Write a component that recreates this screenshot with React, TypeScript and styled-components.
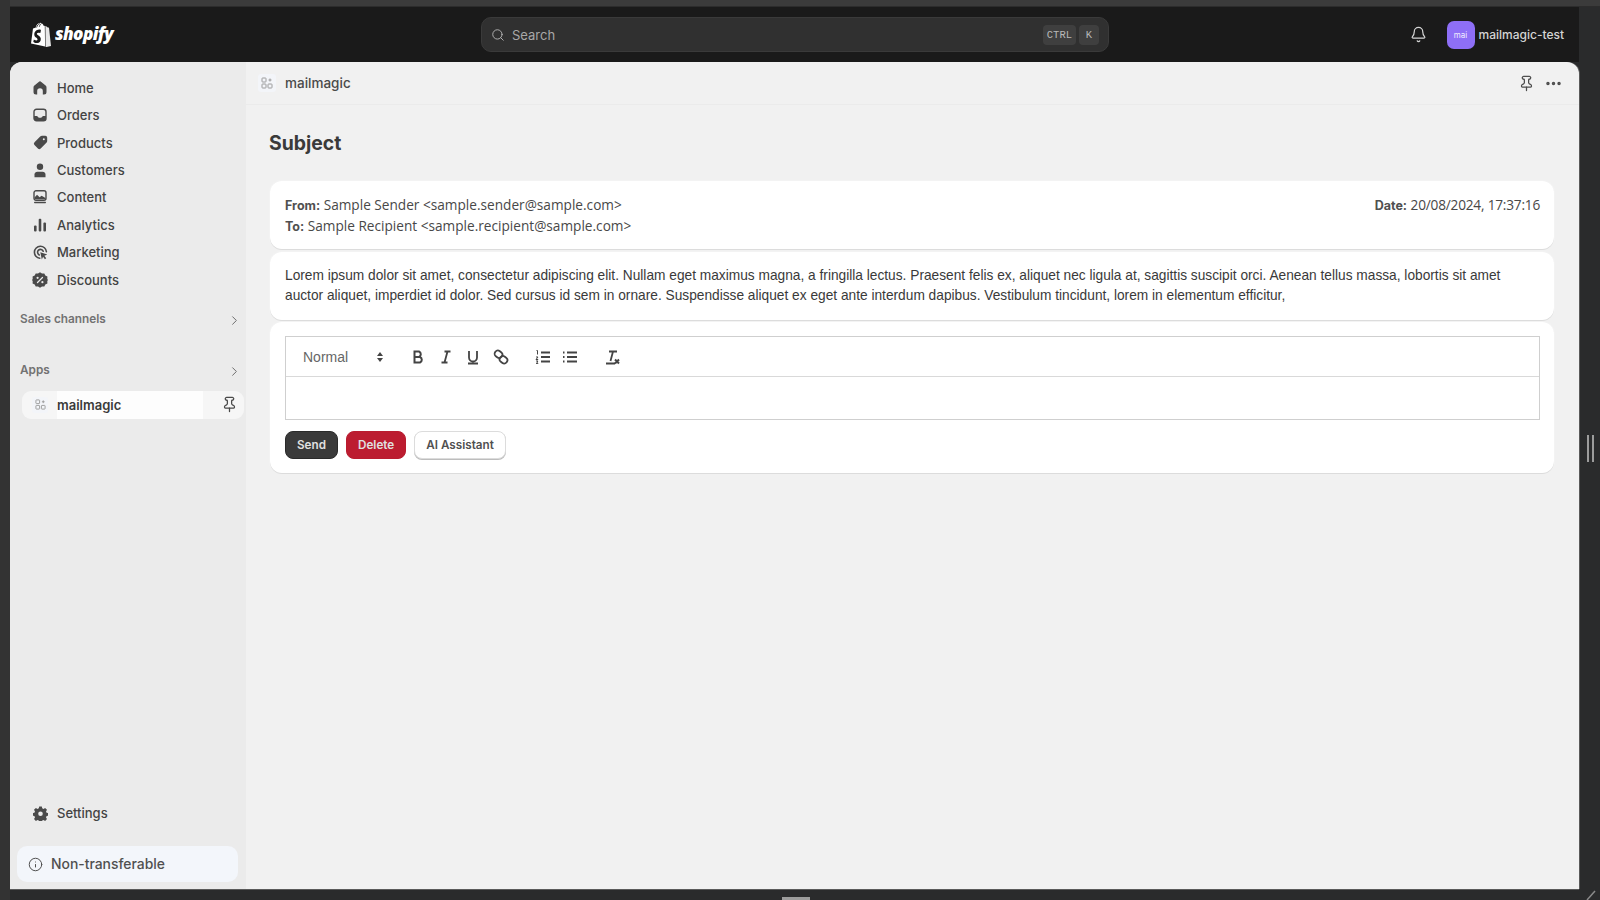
import React from 'react';
import styled, { createGlobalStyle } from 'styled-components';
import { Bell, ChevronRight, Ellipsis, Search, Pin, Info } from 'lucide-react';

const GlobalStyle = createGlobalStyle`
  html, body {
    margin: 0;
    padding: 0;
    background: #2a2b2c;
    font-family: Inter, "Liberation Sans", sans-serif;
  }
  * { box-sizing: border-box; }
`;

const Page = styled.div`
  position: relative;
  width: 1600px;
  height: 900px;
  overflow: hidden;
  background: #2a2b2c;
  display: flex;
  flex-direction: column;
  padding: 7px 21px 11px 10px;
`;

const TopEdge = styled.div`
  position: absolute;
  inset: 0 0 auto 0;
  height: 7px;
  background: #3b3b3b;
  border-bottom: 1px solid #2c2c2c;
`;

const LeftEdge = styled.div`
  position: absolute;
  left: 0;
  top: 0;
  bottom: 0;
  width: 10px;
  background: #333;
`;

const TopBar = styled.header`
  height: 55px;
  flex: none;
  background: #1a1a1a;
  display: grid;
  grid-template-columns: 471px 628px 1fr;
  align-items: center;
  position: relative;
`;

const Logo = styled.div`
  display: flex;
  align-items: center;
  gap: 3px;
  padding-left: 20px;
  color: #fff;
`;

const LogoWord = styled.span`
  font-family: "Open Sans", sans-serif;
  font-size: 17.2px;
  font-weight: 800;
  font-style: italic;
  letter-spacing: -0.6px;
  position: relative;
  top: -1px;
`;

const SearchBox = styled.div`
  height: 35px;
  border-radius: 10px;
  background: #303030;
  border: 1px solid #3a3a3a;
  display: flex;
  align-items: center;
  padding: 0 9px 0 9px;
  color: #b5b5b5;
  font-size: 13px;
  gap: 7px;
`;

const SearchLabel = styled.span`
  flex: 1;
  color: #a8a8a8;
`;

const KeyGroup = styled.div`
  display: flex;
  gap: 3px;
`;

const Key = styled.span`
  height: 20px;
  padding: 0 4px;
  min-width: 20px;
  border-radius: 4px;
  background: #3f3f3f;
  display: flex;
  align-items: center;
  justify-content: center;
  color: #b8b8b8;
  font-size: 10.5px;
  font-family: "Liberation Mono", monospace;
`;

const TopRight = styled.div`
  display: flex;
  align-items: center;
  justify-content: flex-end;
  padding-right: 15px;
  color: #d6d6d6;
`;

const Avatar = styled.div`
  width: 28px;
  height: 28px;
  margin: 0 4px 0 20px;
  border-radius: 7px;
  background: #8e6ff7;
  color: #f2eefe;
  font-size: 8px;
  display: flex;
  align-items: center;
  justify-content: center;
`;

const ShopName = styled.span`
  font-size: 12px;
  font-weight: 500;
  color: #d4d4d4;
`;

const Frame = styled.div`
  flex: 1;
  min-height: 0;
  display: flex;
  border-radius: 12px 12px 0 0;
  overflow: hidden;
  background: #f1f1f1;
  box-shadow: 0 1px 0 #5a5a5a, 1px 0 0 #5a5a5a;
  position: relative;
`;

const Sidebar = styled.nav`
  width: 236px;
  flex: none;
  background: #ebebeb;
  display: flex;
  flex-direction: column;
  padding: 12px 7px 7px 7px;
`;

const NavRow = styled.div`
  height: 27.45px;
  display: flex;
  align-items: center;
  gap: 9px;
  padding-left: 15px;
  font-size: 13px;
  font-weight: 500;
  color: #434343;
`;

const IconSlot = styled.span`
  width: 16px;
  height: 16px;
  flex: none;
  display: flex;
  align-items: center;
  justify-content: center;
  color: #4a4a4a;
`;

const SectionRow = styled.div<{ $top: number }>`
  margin-top: ${props => props.$top}px;
  margin-right: -4px;
  height: 24px;
  display: flex;
  align-items: center;
  justify-content: space-between;
  padding: 0 1px 0 3px;
  font-size: 11.8px;
  font-weight: 600;
  color: #727272;
`;

const SectionChevron = styled(ChevronRight)`
  position: relative;
  top: 2px;
  color: #6d6d6d;
`;

const ActiveApp = styled.div`
  margin: 9px -5px 0 5px;
  height: 28px;
  border-radius: 9px;
  background: #f6f6f6;
  display: flex;
  align-items: center;
  position: relative;
  padding-left: 10px;
  gap: 9px;
  font-size: 13px;
  font-weight: 600;
  color: #3a3a3a;
`;

const AppName = styled.span`
  flex: 1;
  background: #fdfdfd;
  align-self: stretch;
  display: flex;
  align-items: center;
  margin-right: 9px;
`;

const PinSlot = styled.span`
  display: flex;
  margin-right: 6px;
  color: #4a4a4a;
`;

const Spacer = styled.div`
  flex: 1;
`;

const NoticeBox = styled.div`
  margin-top: 19px;
  height: 36px;
  border-radius: 10px;
  background: #f3f6fb;
  display: flex;
  align-items: center;
  gap: 8px;
  padding-left: 11px;
  font-size: 13.9px;
  font-weight: 500;
  color: #505050;
  width: 221px;
`;

const Main = styled.main`
  flex: 1;
  min-width: 0;
  display: flex;
  flex-direction: column;
`;

const AppHeader = styled.div`
  height: 43px;
  flex: none;
  border-bottom: 1px solid #ebebeb;
  display: flex;
  align-items: center;
  padding: 0 16px 0 12px;
  gap: 9px;
  font-size: 13.5px;
  font-weight: 500;
  color: #4a4a4a;
`;

const AppGlyph = styled.span<{ $size: number }>`
  width: ${props => props.$size}px;
  height: ${props => props.$size}px;
  flex: none;
  border-radius: 3px;
  background: #f3f5f9;
  display: flex;
  align-items: center;
  justify-content: center;
  color: #9a9a9a;
`;

const HeaderTitle = styled.span`
  flex: 1;
`;

const HeaderActions = styled.div`
  display: flex;
  align-items: center;
  gap: 9px;
  color: #4e4e4e;
`;

const Content = styled.div`
  padding: 0 25px 0 24px;
`;

const Title = styled.h1`
  margin: 26px 0 26px -1px;
  font-size: 19.4px;
  line-height: 24px;
  font-weight: 700;
  color: #3a3a3a;
`;

const Card = styled.section<{ $height: number; $gap: number }>`
  height: ${props => props.$height}px;
  margin-bottom: ${props => props.$gap}px;
  border-radius: 12px;
  background: #fff;
  box-shadow: 0 1px 0 #dcdcdc, 0 0 0 1px #f3f3f3;
  padding: 14px 14px 14px 15px;
`;

const MetaRow = styled.div`
  display: flex;
  justify-content: space-between;
  font-family: "Open Sans", sans-serif;
  font-size: 13.65px;
  line-height: 20px;
  color: #484848;
`;

const MetaLabel = styled.b`
  font-family: Inter, sans-serif;
  font-size: 12.5px;
  font-weight: 700;
  color: #505050;
`;

const DateValue = styled.span`
  letter-spacing: -0.2px;
`;

const BodyText = styled.p`
  margin: 0;
  font-family: "Liberation Sans", Arial, sans-serif;
  font-size: 13.72px;
  line-height: 20px;
  color: #3a3a3a;
`;

const Editor = styled.div`
  border: 1px solid #cfcfcf;
  height: 84px;
  display: flex;
  flex-direction: column;
`;

const EditorBar = styled.div`
  height: 40px;
  flex: none;
  border-bottom: 1px solid #d9d9d9;
  display: flex;
  align-items: center;
  padding-left: 17px;
  color: #444;
`;

const FormatSelect = styled.div`
  width: 81px;
  display: flex;
  align-items: center;
  justify-content: space-between;
  font-family: "Liberation Sans", sans-serif;
  font-size: 14px;
  color: #666;
  margin-right: 25px;
`;

const ToolGroup = styled.div<{ $gap: number; $after: number }>`
  display: flex;
  align-items: center;
  gap: ${props => props.$gap}px;
  margin-right: ${props => props.$after}px;
`;

const ButtonRow = styled.div`
  display: flex;
  gap: 8px;
  margin-top: 11px;
`;

const Button = styled.button<{ $kind: 'dark' | 'danger' | 'plain' }>`
  height: 28px;
  padding: 0 11px;
  border-radius: 8px;
  font-family: Inter, sans-serif;
  font-size: 11.7px;
  font-weight: 600;
  cursor: pointer;
  border: 1px solid ${props => ({ dark: '#2a2a2a', danger: '#b91c2f', plain: '#dcdcdc' }[props.$kind])};
  background: ${props => ({ dark: '#3a3a3a', danger: '#bc1c30', plain: '#fff' }[props.$kind])};
  color: ${props => (props.$kind === 'plain' ? '#505050' : '#e0e0e0')};
  box-shadow: ${props => (props.$kind === 'plain' ? '0 1px 0 #bdbdbd' : 'none')};
`;

const SideHandle = styled.div`
  position: absolute;
  left: 1587px;
  top: 435px;
  width: 7px;
  height: 27px;
  border-left: 2px solid #9c9c9c;
  border-right: 2px solid #9c9c9c;
`;

const BottomHandle = styled.div`
  position: absolute;
  left: 782px;
  top: 897px;
  width: 28px;
  height: 3px;
  background: #9c9c9c;
`;

const CornerGrip = styled.svg`
  position: absolute;
  left: 1586px;
  top: 890px;
`;

const ShopifyBag = () => (
  <svg width="22" height="25" viewBox="0 0 22 25" aria-hidden="true">
    <path fill="#fff" d="M1 21.5 3 6.600c1.200-.3 2-.6 2.600-.8C6.300 3.200 8 .8 10.200.8c.6 0 1 .2 1.300.6 1.300.1 2 1.400 2.300 2.700l1-.3.3 20.600L1 21.500z" />
    <path fill="#e8e8e8" d="M15.800 3.900c.2 0 1.800 1.500 2 1.600.2 0 1 .1 1.200.2l2 18.300-5.400 1.200-.2-21.300z" />
    <path fill="#1a1a1a" d="M10.900 8.700 10.300 11s-.9-.4-1.900-.3c-1.500.1-1.500 1-1.500 1.300.1 1.300 3.700 1.600 3.900 4.800.2 2.500-1.300 4.200-3.500 4.300-2.600.2-4-1.400-4-1.400l.6-2.300s1.400 1.100 2.600 1c.8 0 1.100-.7 1-1.100-.1-1.800-3-1.700-3.200-4.600C4.100 10.200 6 7.800 9.200 7.600c1.200-.1 1.700.2 1.700 1.100z" />
    <path fill="none" stroke="#1a1a1a" strokeWidth=".8" d="M6.600 5.500c.5-2 1.900-3.700 3.300-3.900M9.300 4.800c.3-1.300 1-2.700 2-3" />
  </svg>
);

const HomeIcon = () => (
  <svg width="14" height="14" viewBox="0 0 14 14" fill="currentColor" aria-hidden="true">
    <path d="M5.700.9a2 2 0 0 1 2.600 0l4.300 3.600c.6.500.9 1.200.9 1.900V11a2.500 2.500 0 0 1-2.500 2.500H9.800V10a2.800 2.800 0 0 0-5.600 0v3.500H3A2.500 2.500 0 0 1 .5 11V6.400c0-.7.300-1.400.9-1.900L5.700.9z" />
  </svg>
);

const OrdersIcon = () => (
  <svg width="14" height="14" viewBox="0 0 14 14" aria-hidden="true">
    <rect x="1" y="1.200" width="12" height="11.600" rx="2.500" fill="none" stroke="currentColor" strokeWidth="1.400" />
    <path fill="currentColor" d="M1 8h2.800c.5 0 .8.300 1 .7.300.7 1.100 1.100 2.200 1.100s1.900-.4 2.200-1.100c.2-.4.500-.7 1-.7H13v2.500a2.300 2.300 0 0 1-2.300 2.300H3.300A2.300 2.300 0 0 1 1 10.500V8z" />
  </svg>
);

const TagIcon = () => (
  <svg width="15" height="15" viewBox="0 0 15 15" aria-hidden="true">
    <path fill="currentColor" fillRule="evenodd" d="M9 .8h3.300c1 0 1.900.9 1.900 1.900V6c0 .7-.3 1.300-.8 1.800l-5.700 5.700a2 2 0 0 1-2.800 0L1.500 10.100a2 2 0 0 1 0-2.800L7.200 1.600C7.700 1.100 8.300.8 9 .8zm1.800 2.400a1 1 0 1 0 0 2 1 1 0 0 0 0-2z" />
  </svg>
);

const PersonIcon = () => (
  <svg width="14" height="15" viewBox="0 0 14 15" fill="currentColor" aria-hidden="true">
    <circle cx="7" cy="3.800" r="3.200" />
    <path d="M1.500 11.500c0-1.600 1.300-2.700 2.900-2.700h5.200c1.600 0 2.900 1.100 2.900 2.700v2.700h-11v-2.700z" />
  </svg>
);

const ContentIcon = () => (
  <svg width="14" height="14" viewBox="0 0 14 14" aria-hidden="true">
    <rect x="1" y=".8" width="12" height="9.500" rx="2" fill="none" stroke="currentColor" strokeWidth="1.400" />
    <path fill="currentColor" d="M1.500 7.500 4 4.800l2.600 2.400 2-1.500 3.900 2.300v1.300H1.500z" />
    <rect x="1" y="11.700" width="12" height="1.500" rx=".7" fill="currentColor" />
  </svg>
);

const ChartIcon = () => (
  <svg width="14" height="14" viewBox="0 0 14 14" fill="currentColor" aria-hidden="true">
    <rect x="1" y="7.500" width="2.600" height="6" rx="1" />
    <rect x="5.700" y=".8" width="2.600" height="12.700" rx="1" />
    <rect x="10.400" y="4.500" width="2.600" height="9" rx="1" />
  </svg>
);

const TargetIcon = () => (
  <svg width="15" height="15" viewBox="0 0 15 15" aria-hidden="true">
    <path fill="none" stroke="currentColor" strokeWidth="1.600" strokeLinecap="round" d="M6.800 13.200A6 6 0 1 1 13.400 6.700" />
    <path fill="none" stroke="currentColor" strokeWidth="1.600" strokeLinecap="round" d="M6.300 9.900A2.900 2.900 0 1 1 10.200 6.300" />
    <path fill="currentColor" d="M7.300 7.300l7 2.200-2.900 1.200 1.800 2.500-1.300 1-1.800-2.500-1.300 2.700z" />
  </svg>
);

const BadgeIcon = () => (
  <svg width="16" height="16" viewBox="0 0 16 16" aria-hidden="true">
    <path fill="currentColor" d="M8 .3l2 1.300 2.300-.1 1 2.100 2.100 1-.1 2.300L16 8l-.7 1.100.1 2.300-2.100 1-1 2.100-2.300-.1-2 1.300-2-1.300-2.300.1-1-2.100-2.100-1 .1-2.300L0 8l.7-1.100-.1-2.300 2.100-1 1-2.100 2.300.1z" />
    <circle cx="5.600" cy="5.800" r="1.100" fill="#ebebeb" />
    <circle cx="10.400" cy="10.200" r="1.100" fill="#ebebeb" />
    <path stroke="#ebebeb" strokeWidth="1.300" strokeLinecap="round" d="M10.500 5.500 5.500 10.500" />
  </svg>
);

const GearIcon = () => (
  <svg width="15" height="15" viewBox="0 0 15 15" aria-hidden="true">
    <path fill="currentColor" fillRule="evenodd" d="M6.200.5h2.600l.4 1.800 1.300.6 1.600-1 1.900 1.900-1 1.600.6 1.300 1.800.4v2.600l-1.800.4-.6 1.300 1 1.600-1.900 1.900-1.600-1-1.300.6-.4 1.700H6.200l-.4-1.700-1.300-.6-1.600 1-1.900-1.900 1-1.600-.6-1.300-1.800-.4V7.100l1.800-.4.6-1.300-1-1.600 1.900-1.900 1.600 1 1.300-.6.400-1.800zm1.300 5a2.300 2.300 0 1 0 0 4.600 2.300 2.300 0 0 0 0-4.600z" />
  </svg>
);

const AppTiles = ({ size }: { size: number }) => (
  <svg width={size} height={size} viewBox="0 0 12 12" fill="none" stroke="currentColor" strokeWidth="1" aria-hidden="true">
    <rect x="1" y="1" width="4" height="4" rx=".6" />
    <rect x="1" y="7" width="4" height="4" rx=".6" />
    <rect x="7" y="7" width="4" height="4" rx=".6" />
    <path d="M9 1.500v3M7.500 3h3" />
  </svg>
);

const ToolIcon = ({ children }: { children: React.ReactNode }) => (
  <svg width="18" height="18" viewBox="0 0 18 18" fill="none" stroke="#444" strokeWidth="1.800" aria-hidden="true">
    {children}
  </svg>
);

const navItems = [
  { label: 'Home', icon: <HomeIcon /> },
  { label: 'Orders', icon: <OrdersIcon /> },
  { label: 'Products', icon: <TagIcon /> },
  { label: 'Customers', icon: <PersonIcon /> },
  { label: 'Content', icon: <ContentIcon /> },
  { label: 'Analytics', icon: <ChartIcon /> },
  { label: 'Marketing', icon: <TargetIcon /> },
  { label: 'Discounts', icon: <BadgeIcon /> },
];

const App: React.FC = () => (
  <Page>
    <GlobalStyle />
    <TopEdge />
    <LeftEdge />
    <TopBar>
      <Logo>
        <ShopifyBag />
        <LogoWord>shopify</LogoWord>
      </Logo>
      <SearchBox>
        <Search size={14} strokeWidth={1.6} />
        <SearchLabel>Search</SearchLabel>
        <KeyGroup>
          <Key>CTRL</Key>
          <Key>K</Key>
        </KeyGroup>
      </SearchBox>
      <TopRight>
        <Bell size={17} strokeWidth={1.7} />
        <Avatar>mai</Avatar>
        <ShopName>mailmagic-test</ShopName>
      </TopRight>
    </TopBar>
    <Frame>
      <Sidebar>
        {navItems.map(item => (
          <NavRow key={item.label}>
            <IconSlot>{item.icon}</IconSlot>
            {item.label}
          </NavRow>
        ))}
        <SectionRow $top={13}>
          Sales channels
          <SectionChevron size={15} strokeWidth={1.6} />
        </SectionRow>
        <SectionRow $top={27}>
          Apps
          <SectionChevron size={15} strokeWidth={1.6} />
        </SectionRow>
        <ActiveApp>
          <AppGlyph $size={16}>
            <AppTiles size={11} />
          </AppGlyph>
          <AppName>mailmagic</AppName>
          <PinSlot>
            <Pin size={17} strokeWidth={1.8} />
          </PinSlot>
        </ActiveApp>
        <Spacer />
        <NavRow>
          <IconSlot>
            <GearIcon />
          </IconSlot>
          Settings
        </NavRow>
        <NoticeBox>
          <Info size={15} strokeWidth={1.6} />
          Non-transferable
        </NoticeBox>
      </Sidebar>
      <Main>
        <AppHeader>
          <AppGlyph $size={18}>
            <AppTiles size={12} />
          </AppGlyph>
          <HeaderTitle>mailmagic</HeaderTitle>
          <HeaderActions>
            <Pin size={17} strokeWidth={1.8} />
            <Ellipsis size={19} strokeWidth={2.4} />
          </HeaderActions>
        </AppHeader>
        <Content>
          <Title>Subject</Title>
          <Card $height={68} $gap={3}>
            <MetaRow>
              <span>
                <MetaLabel>From:</MetaLabel> Sample Sender &lt;sample.sender@sample.com&gt;
              </span>
              <span>
                <MetaLabel>Date:</MetaLabel> <DateValue>20/08/2024, 17:37:16</DateValue>
              </span>
            </MetaRow>
            <MetaRow>
              <span>
                <MetaLabel>To:</MetaLabel> Sample Recipient &lt;sample.recipient@sample.com&gt;
              </span>
            </MetaRow>
          </Card>
          <Card $height={68} $gap={2}>
            <BodyText>
              Lorem ipsum dolor sit amet, consectetur adipiscing elit. Nullam eget maximus magna, a fringilla lectus.
              Praesent felis ex, aliquet nec ligula at, sagittis suscipit orci. Aenean tellus massa, lobortis sit amet
              auctor aliquet, imperdiet id dolor. Sed cursus id sem in ornare. Suspendisse aliquet ex eget ante interdum
              dapibus. Vestibulum tincidunt, lorem in elementum efficitur,
            </BodyText>
          </Card>
          <Card $height={151} $gap={0}>
            <Editor>
              <EditorBar>
                <FormatSelect>
                  Normal
                  <svg width="8" height="12" viewBox="0 0 8 12" fill="#444" aria-hidden="true">
                    <path d="M4 1l3 4H1zM4 11 1 7h6z" />
                  </svg>
                </FormatSelect>
                <ToolGroup $gap={9.5} $after={24}>
                  <ToolIcon>
                    <path strokeWidth="2" d="M5.500 3.500h4.500a3 3 0 0 1 0 5.500H5.500zM5.500 9h5.500a3 3 0 0 1 0 5.500H5.500z" />
                  </ToolIcon>
                  <ToolIcon>
                    <path d="M7.500 3.500h6M4.500 14.500h6M10.500 3.500l-3 11" />
                  </ToolIcon>
                  <ToolIcon>
                    <path d="M5 3v6.500a4 4 0 0 0 8 0V3M4 15.500h10" />
                  </ToolIcon>
                  <ToolIcon>
                    <rect x="2.500" y="3" width="8" height="6.500" rx="3.200" transform="rotate(38 6.500 6.250)" />
                    <rect x="7.500" y="8.500" width="8" height="6.500" rx="3.200" transform="rotate(38 11.500 11.750)" />
                  </ToolIcon>
                </ToolGroup>
                <ToolGroup $gap={9} $after={24}>
                  <ToolIcon>
                    <path d="M7 4.500h9M7 9h9M7 13.500h9" />
                    <path strokeWidth="1" d="M2.500 2.500h1v4M2 9h2l-2 2.500h2.200M2 13h2l-1 1.200 1 1.200H2" />
                  </ToolIcon>
                  <ToolIcon>
                    <path d="M6 4.500h10M6 9h10M6 13.500h10" />
                    <path strokeWidth="2" d="M2 4.500h1.500M2 9h1.500M2 13.500h1.500" />
                  </ToolIcon>
                </ToolGroup>
                <ToolIcon>
                  <path d="M6 3.500h8M10 3.500 7.500 13M3 15.500h9" />
                  <path strokeWidth="2" d="M12 11.500l4 4M16 11.500l-4 4" />
                </ToolIcon>
              </EditorBar>
            </Editor>
            <ButtonRow>
              <Button $kind="dark">Send</Button>
              <Button $kind="danger">Delete</Button>
              <Button $kind="plain">AI Assistant</Button>
            </ButtonRow>
          </Card>
        </Content>
      </Main>
    </Frame>
    <SideHandle />
    <BottomHandle />
    <CornerGrip width="12" height="10" viewBox="0 0 12 10" aria-hidden="true">
      <path stroke="#8a8a8a" strokeWidth="1.500" d="M1 10 9 1" />
    </CornerGrip>
  </Page>
);

export default App;
